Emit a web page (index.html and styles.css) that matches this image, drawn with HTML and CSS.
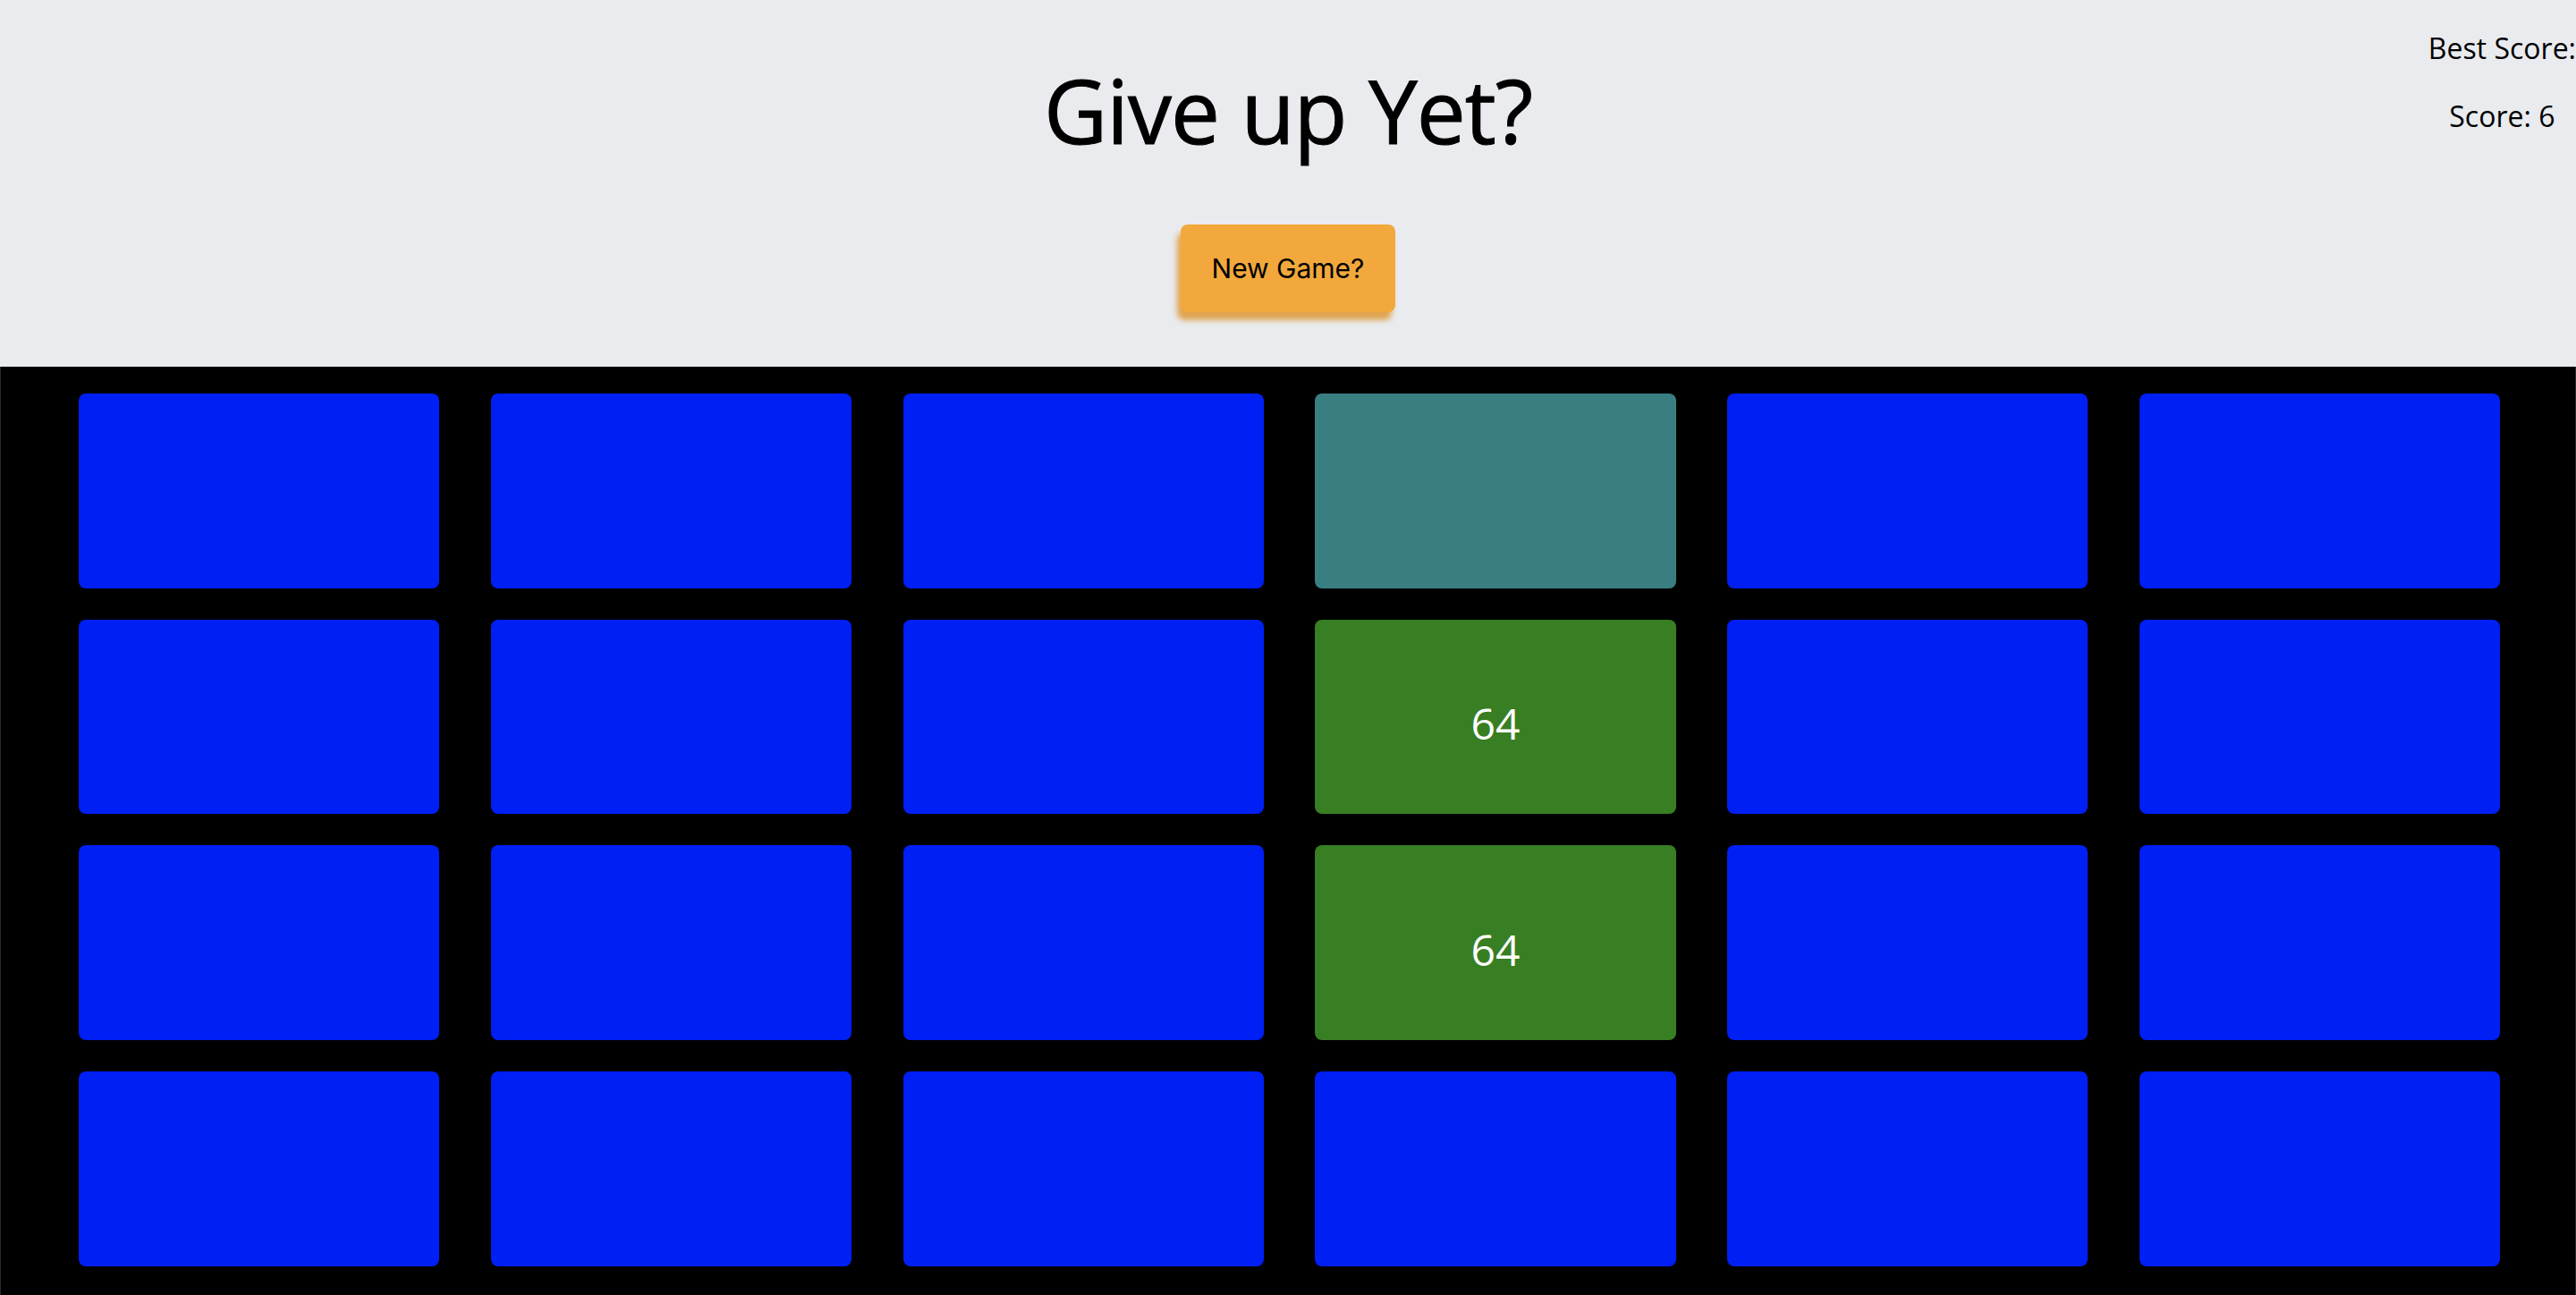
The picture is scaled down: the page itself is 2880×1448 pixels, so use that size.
FILE: index.html
```html
<!DOCTYPE html>
<html lang="en">
<head>
<meta charset="utf-8">
<title>Give up Yet?</title>
<link rel="stylesheet" href="styles.css">
</head>
<body>
<div class="page">
  <header class="header">
    <h1 class="title">Give up Yet?</h1>
    <button class="new-game">New Game?</button>
    <div class="scores">
      <p class="score-line">Best Score:</p>
      <p class="score-line">Score: 6</p>
    </div>
  </header>
  <main class="board">
    <div class="tile"></div>
    <div class="tile"></div>
    <div class="tile"></div>
    <div class="tile tile-teal"></div>
    <div class="tile"></div>
    <div class="tile"></div>

    <div class="tile"></div>
    <div class="tile"></div>
    <div class="tile"></div>
    <div class="tile tile-green">64</div>
    <div class="tile"></div>
    <div class="tile"></div>

    <div class="tile"></div>
    <div class="tile"></div>
    <div class="tile"></div>
    <div class="tile tile-green">64</div>
    <div class="tile"></div>
    <div class="tile"></div>

    <div class="tile"></div>
    <div class="tile"></div>
    <div class="tile"></div>
    <div class="tile"></div>
    <div class="tile"></div>
    <div class="tile"></div>
  </main>
</div>
</body>
</html>
```
FILE: styles.css
```css
html, body {
  margin: 0;
  padding: 0;
  height: 1448px;
  overflow: hidden;
}

body {
  font-family: "Open Sans", "Noto Sans", sans-serif;
  color: #000;
  background: #000;
}

.page {
  display: flex;
  flex-direction: column;
  height: 1448px;
}

.header {
  position: relative;
  height: 410px;
  flex: 0 0 410px;
  background: #e9ebef;
  display: flex;
  flex-direction: column;
  align-items: center;
}

.title {
  margin: 57px 0 0;
  font-size: 98px;
  font-weight: 400;
  letter-spacing: -1px;
  -webkit-text-stroke: 1px #000;
  line-height: 1.362;
}

.new-game {
  margin-top: 61px;
  height: 98px;
  width: 240px;
  padding: 0;
  border: none;
  border-radius: 8px;
  background: #f2a83c;
  box-shadow: -4px 9px 6px rgba(222, 152, 52, 0.85);
  font-family: Inter, "Liberation Sans", sans-serif;
  font-size: 30px;
  color: #000;
}

.scores {
  position: absolute;
  top: 0;
  right: 0;
  text-align: center;
}

.score-line {
  margin: 32px 0;
  font-size: 32px;
  line-height: 1.362;
  white-space: pre;
}

.board {
  flex: 1;
  background: #000;
  border-left: 1px solid #2a2a2a;
  border-right: 1px solid #2a2a2a;
  padding: 30px 0 0 87px;
  display: grid;
  grid-template-columns: repeat(6, 403.2px);
  grid-auto-rows: 217.5px;
  column-gap: 57.6px;
  row-gap: 35.2px;
  align-content: start;
}

.tile {
  background: #001ff5;
  border-radius: 8px;
  display: flex;
  align-items: center;
  justify-content: center;
  color: #fff;
  font-size: 48px;
  padding-top: 14px;
  box-sizing: border-box;
}

.tile-teal {
  background: #397f82;
}

.tile-green {
  background: #387e22;
}
```
